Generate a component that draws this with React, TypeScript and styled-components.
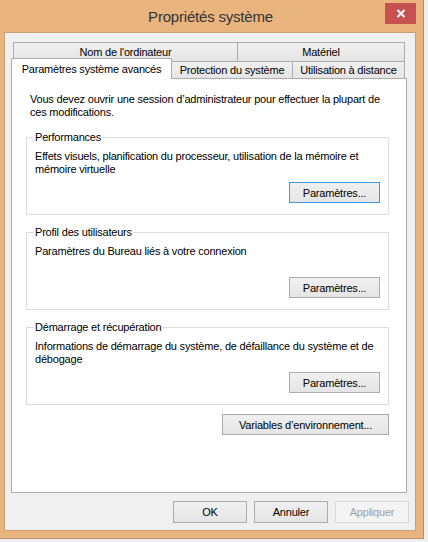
import React from "react";
import styled, { createGlobalStyle } from "styled-components";

const Global = createGlobalStyle`
  html, body { margin: 0; padding: 0; background: #eeeeee; }
  body { font-family: "Liberation Sans", Arial, sans-serif; }
  * { box-sizing: border-box; }
`;

const Window = styled.div`
  width: 424px;
  height: 539px;
  background: #eab47f;
  border-right: 1px solid #b98f66;
  border-bottom: 1px solid #b98f66;
  display: flex;
  flex-direction: column;
`;

const TitleBar = styled.div`
  height: 32px;
  flex: none;
  display: grid;
  grid-template-columns: 31px 1fr 31px;
  padding: 0 7px 0 5px;
  align-items: start;
`;

const Title = styled.div`
  grid-column: 2;
  margin-top: 7px;
  line-height: 20px;
  font-size: 15px;
  letter-spacing: -0.2px;
  color: #333333;
  text-align: center;
`;

const CloseButton = styled.div`
  grid-column: 3;
  margin-top: 3px;
  width: 31px;
  height: 21px;
  background: #c75050;
  display: flex;
  align-items: center;
  justify-content: center;
`;

const Client = styled.div`
  flex: 1;
  margin: 0 7px 7px 4px;
  border: 1px solid #c99f76;
  background: #f0f0f0;
  padding: 9px 0 7px 0;
  display: flex;
  flex-direction: column;
  font-size: 11px;
  letter-spacing: -0.2px;
  color: #000;
`;

const TabArea = styled.div`
  flex: 1;
  margin: 0 8px 0 6px;
  display: flex;
  flex-direction: column;
`;

const TabRow = styled.div<{ $indent: number; $height: number }>`
  display: flex;
  align-items: flex-end;
  height: ${(p) => p.$height}px;
  padding-left: ${(p) => p.$indent}px;
`;

const Tab = styled.div<{ $w: number; $h: number; $selected?: boolean; $first?: boolean }>`
  width: ${(p) => p.$w}px;
  height: ${(p) => p.$h}px;
  margin-left: ${(p) => (p.$first ? 0 : -1)}px;
  border: 1px solid #acacac;
  border-bottom: none;
  background: ${(p) => (p.$selected ? "#ffffff" : "linear-gradient(#f0f0f0, #e5e5e5)")};
  display: flex;
  align-items: center;
  justify-content: center;
  white-space: nowrap;
  ${(p) =>
    p.$selected
      ? `position: relative; z-index: 1; margin-top: -3px; margin-bottom: -1px;`
      : ""}
`;

const Panel = styled.div`
  flex: 1;
  background: #ffffff;
  border: 1px solid #acacac;
  padding: 14px 17px 0 14px;
  display: flex;
  flex-direction: column;
`;

const Intro = styled.p`
  margin: 0 0 18px 0;
  padding-left: 4px;
  line-height: 13px;
`;

const Groups = styled.div`
  display: flex;
  flex-direction: column;
  gap: 17px;
`;

const GroupBox = styled.div`
  height: 78px;
  border: 1px solid #dcdcdc;
  padding: 0 8px 11px 8px;
  display: flex;
  flex-direction: column;
`;

const GroupTitle = styled.div`
  align-self: flex-start;
  margin: -7px 0 0 -1px;
  padding: 0 1px;
  line-height: 13px;
  background: #ffffff;
`;

const GroupText = styled.div`
  margin-top: 6px;
  line-height: 13px;
`;

const Button = styled.button<{ $w: number; $h?: number; $focused?: boolean }>`
  width: ${(p) => p.$w}px;
  height: ${(p) => p.$h ?? 21}px;
  padding: 0;
  font-family: "Liberation Sans", Arial, sans-serif;
  font-size: 11px;
  letter-spacing: -0.2px;
  color: #000;
  border: 1px solid ${(p) => (p.$focused ? "#3d98e6" : "#acacac")};
  background: linear-gradient(#f0f0f0, #e5e5e5);
  border-radius: 0;
  display: flex;
  align-items: center;
  justify-content: center;
  flex: none;
  &:disabled {
    border-color: #d9d9d9;
    background: #f4f4f4;
    color: #a0a0a0;
  }
`;

const GroupButton = styled(Button)`
  margin-top: auto;
  align-self: flex-end;
`;

const EnvButton = styled(Button)`
  margin-top: 9px;
  align-self: flex-end;
`;

const ButtonRow = styled.div`
  margin-top: 8px;
  padding-right: 6px;
  display: flex;
  justify-content: flex-end;
  gap: 7px;
`;

const CloseIcon = () => (
  <svg width="10" height="9" viewBox="0 0 10 9">
    <path d="M1.5 1 L8.5 8 M8.5 1 L1.5 8" stroke="#ffffff" strokeWidth="1.9" fill="none" />
  </svg>
);

export default function App() {
  return (
    <>
      <Global />
      <Window>
        <TitleBar>
          <Title>Propriétés système</Title>
          <CloseButton>
            <CloseIcon />
          </CloseButton>
        </TitleBar>
        <Client>
          <TabArea>
            <TabRow $indent={2} $height={19}>
              <Tab $w={225} $h={19} $first>
                Nom de l'ordinateur
              </Tab>
              <Tab $w={168} $h={19}>
                Matériel
              </Tab>
            </TabRow>
            <TabRow $indent={0} $height={17}>
              <Tab $w={161} $h={21} $first $selected>
                Paramètres système avancés
              </Tab>
              <Tab $w={122} $h={17}>
                Protection du système
              </Tab>
              <Tab $w={113} $h={17}>
                Utilisation à distance
              </Tab>
            </TabRow>
            <Panel>
              <Intro>
                Vous devez ouvrir une session d’administrateur pour effectuer la plupart de ces
                modifications.
              </Intro>
              <Groups>
                <GroupBox>
                  <GroupTitle>Performances</GroupTitle>
                  <GroupText>
                    Effets visuels, planification du processeur, utilisation de la mémoire et
                    mémoire virtuelle
                  </GroupText>
                  <GroupButton $w={91} $focused>
                    Paramètres...
                  </GroupButton>
                </GroupBox>
                <GroupBox>
                  <GroupTitle>Profil des utilisateurs</GroupTitle>
                  <GroupText>Paramètres du Bureau liés à votre connexion</GroupText>
                  <GroupButton $w={91}>Paramètres...</GroupButton>
                </GroupBox>
                <GroupBox>
                  <GroupTitle>Démarrage et récupération</GroupTitle>
                  <GroupText>
                    Informations de démarrage du système, de défaillance du système et de
                    débogage
                  </GroupText>
                  <GroupButton $w={91}>Paramètres...</GroupButton>
                </GroupBox>
              </Groups>
              <EnvButton $w={167}>Variables d’environnement...</EnvButton>
            </Panel>
          </TabArea>
          <ButtonRow>
            <Button $w={74} $h={22}>OK</Button>
            <Button $w={74} $h={22}>Annuler</Button>
            <Button $w={74} $h={22} disabled>
              Appliquer
            </Button>
          </ButtonRow>
        </Client>
      </Window>
    </>
  );
}
